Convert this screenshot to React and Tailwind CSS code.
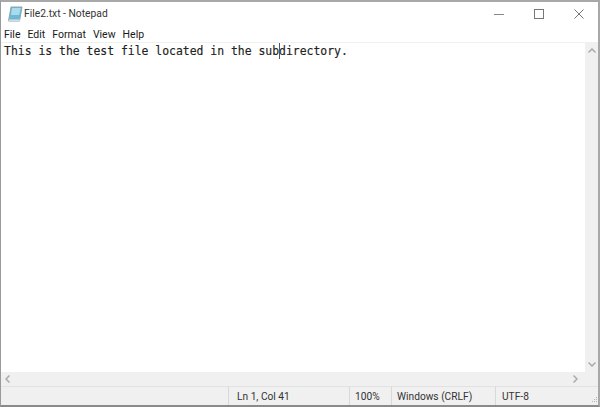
// App.jsx
// Notepad window: title bar, menu, text area, scrollbars, status bar

const menuItems = ['File', 'Edit', 'Format', 'View', 'Help'];

const NotepadIcon = () => (
  <svg width="16" height="17" viewBox="0 0 16 17" className="shrink-0">
    <path d="M4 1 H15 L12.5 15 H1.5 Z" fill="#6fb7d6" stroke="#8fa5ae" strokeWidth="1" />
    <path d="M5 2 H14 L12 9 H4 Z" fill="#a6dcec" />
    <path d="M1.5 15 H12.5 L13 13.5 H2 Z" fill="#d5dde0" />
  </svg>
);

const App = () => {
  return (
    <div className="w-[600px] h-[407px] flex flex-col bg-white border-t-2 border-t-[#a8a8a8] border-l border-l-[#9a9a9a] border-r-2 border-r-[#a8a8a8] border-b-2 border-b-[#8a8a8a] overflow-hidden font-['Roboto',sans-serif] text-[#1a1a1a]">

      {/* Title bar */}
      <div className="h-[24px] flex items-center shrink-0">
        <div className="flex items-center gap-[1px] pl-[6px] flex-1">
          <NotepadIcon />
          <span className="text-[10.3px] leading-none text-[#333] pt-[1px]">File2.txt - Notepad</span>
        </div>
        <div className="flex items-center gap-[30px] pr-[14px]">
          <svg width="10" height="10" viewBox="0 0 10 10"><path d="M0 5.5 H10" stroke="#888" strokeWidth="1" /></svg>
          <svg width="10" height="10" viewBox="0 0 10 10"><rect x="0.5" y="0.5" width="9" height="9" fill="none" stroke="#777" strokeWidth="1" /></svg>
          <svg width="10" height="10" viewBox="0 0 10 10"><path d="M0.5 0.5 L9.5 9.5 M9.5 0.5 L0.5 9.5" stroke="#777" strokeWidth="1" /></svg>
        </div>
      </div>

      {/* Menu bar */}
      <div className="h-[17px] flex items-center gap-[7px] pl-[3px] pt-[2px] shrink-0 text-[10.5px] leading-none border-b border-b-[#f0f0f0]">
        {menuItems.map((item) => (
          <span key={item}>{item}</span>
        ))}
      </div>

      {/* Text area */}
      <div className="flex-1 flex min-h-0">
        <div className="flex-1 pl-[3px] font-['DejaVu_Sans_Mono',monospace] text-[11.43px] leading-[16px] whitespace-pre text-[#222] [-webkit-text-stroke:0.15px_#222]">
          <span>This is the test file located in the sub</span>
          <span className="relative">
            <span className="absolute left-0 top-[-1px] h-[16px] border-l border-l-[#555]" />
            directory.
          </span>
        </div>
        <div className="w-[13px] bg-[#f0f0f0] flex flex-col items-center pt-[5px]">
          <svg width="8" height="5" viewBox="0 0 8 5"><path d="M0.5 4.5 L4 1 L7.5 4.5" fill="none" stroke="#aaa" strokeWidth="1.5" /></svg>
          <div className="flex-1" />
          <svg width="8" height="5" viewBox="0 0 8 5" className="mb-[5px]"><path d="M0.5 0.5 L4 4 L7.5 0.5" fill="none" stroke="#aaa" strokeWidth="1.5" /></svg>
        </div>
      </div>

      {/* Horizontal scrollbar */}
      <div className="h-[14px] bg-[#f0f0f0] flex items-center justify-between pl-[4px] pr-[20px] shrink-0">
        <svg width="5" height="8" viewBox="0 0 5 8"><path d="M4.5 0.5 L1 4 L4.5 7.5" fill="none" stroke="#aaa" strokeWidth="1.5" /></svg>
        <svg width="5" height="8" viewBox="0 0 5 8"><path d="M0.5 0.5 L4 4 L0.5 7.5" fill="none" stroke="#aaa" strokeWidth="1.5" /></svg>
      </div>

      {/* Status bar */}
      <div className="h-[19px] bg-[#f0f0f0] border-t border-t-[#e2e2e2] flex shrink-0 text-[10.2px] leading-none text-[#333] relative">
        <div className="w-[227px]" />
        <div className="w-[121px] border-l border-l-[#d8d8d8] flex items-center pl-[8px] pt-[3px]">Ln 1, Col 41</div>
        <div className="w-[42px] border-l border-l-[#d8d8d8] flex items-center pl-[5px] pt-[3px]">100%</div>
        <div className="w-[104px] border-l border-l-[#d8d8d8] flex items-center pl-[5px] pt-[3px]">Windows (CRLF)</div>
        <div className="flex-1 border-l border-l-[#d8d8d8] flex items-center pl-[6px] pt-[3px]">UTF-8</div>
        <svg width="10" height="10" viewBox="0 0 10 10" className="absolute right-[0px] bottom-[0px]">
          <path d="M8 2h1v1H8zM6 4h1v1H6zM8 4h1v1H8zM4 6h1v1H4zM6 6h1v1H6zM8 6h1v1H8z" fill="#b5b5b5" />
        </svg>
      </div>
    </div>
  );
};

export default App;
